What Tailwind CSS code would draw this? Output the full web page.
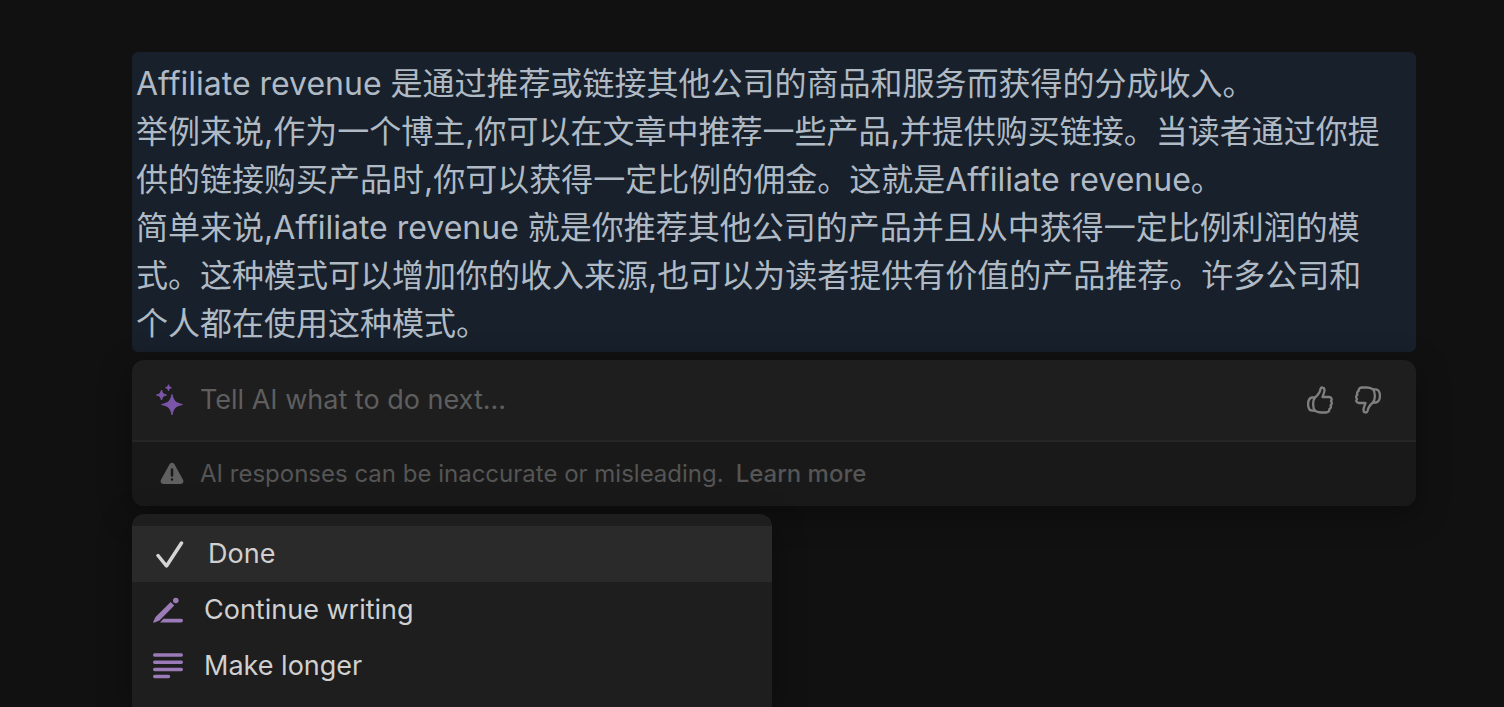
<!doctype html>

<html lang="zh-CN">

  <head>
    <meta charset="utf-8">
    <meta name="viewport" content="width=device-width, initial-scale=1">

    <title>AI writer</title>

    <script src="https://cdn.jsdelivr.net/npm/@tailwindcss/browser@4"></script>
  </head>

  <body class="bg-[#111111] font-['Inter','Noto_Sans_CJK_SC',sans-serif]">
    <main class="min-h-screen flex flex-col pt-13 pl-33 pr-22">

      <article class="bg-[#17202b] text-[#b0bac5] rounded-md px-1 pt-2 pb-1 text-[32px] leading-12">
        <p>Affiliate revenue 是通过推荐或链接其他公司的商品和服务而获得的分成收入。</p>
        <p>举例来说,作为一个博主,你可以在文章中推荐一些产品,并提供购买链接。当读者通过你提<br>供的链接购买产品时,你可以获得一定比例的佣金。这就是Affiliate revenue。</p>
        <p>简单来说,Affiliate revenue 就是你推荐其他公司的产品并且从中获得一定比例利润的模<br>式。这种模式可以增加你的收入来源,也可以为读者提供有价值的产品推荐。许多公司和<br>个人都在使用这种模式。</p>
      </article>

      <section class="mt-2 rounded-xl bg-[#1e1e1e] shadow-[0_8px_32px_rgba(0,0,0,0.35)]">
        <form class="h-20 flex items-center px-6">
          <svg class="w-7 h-8 shrink-0 fill-[#7b55a8] stroke-[#7b55a8] stroke-1" viewBox="0 0 28 32" stroke-linejoin="round" aria-hidden="true">
            <path d="M16 10.500C17.600 17 19.500 19 26.500 20.500C19.500 22 17.600 24 16 30.800C14.400 24 12.500 22 5.500 20.500C12.500 19 14.400 17 16 10.500Z" />
            <path d="M5.500 6C6.500 9.500 7 10 10.500 11C7 12 6.500 12.500 5.500 16C4.500 12.500 4 12 .5 11C4 10 4.500 9.500 5.500 6Z" />
            <path d="M12.500 .7C13.100 2.700 13.500 3.100 15.500 3.700C13.500 4.300 13.100 4.700 12.500 6.700C11.900 4.700 11.500 4.300 9.500 3.700C11.500 3.100 11.900 2.700 12.500 .7Z" />
          </svg>
          <input class="ml-4 flex-1 min-w-0 bg-transparent outline-none text-[27px] leading-10 text-[#d4d4d4] placeholder:text-[#5e5e5e]" type="text" aria-label="Tell AI what to do next" placeholder="Tell AI what to do next...">
          <button class="p-2.5" type="button" aria-label="Good response">
            <svg class="size-7 fill-none stroke-[#808080] stroke-[2.300]" viewBox="0 0 28 28" stroke-linejoin="round" stroke-linecap="round">
              <path d="M9 11.500C12 9 14 6 14.500 3C15 .8 18.500 1 18.500 4C18.500 6.500 17.300 8.500 16.500 11H23C25.500 11 26.500 13.500 25 15C26.300 16.500 26 18.500 24.600 19.300C25.400 21 24.700 22.700 23.300 23.200C23.500 25.500 22 26.500 20 26.500H15C12 26.500 10.500 25.500 9 24.700C6.500 22 6.500 14.500 9 11.500Z" />
              <path d="M9 11.500H6C.8 12.500.8 24 6 24.700H9" />
            </svg>
          </button>
          <button class="p-2.5" type="button" aria-label="Bad response">
            <svg class="size-7 rotate-180 fill-none stroke-[#808080] stroke-[2.300]" viewBox="0 0 28 28" stroke-linejoin="round" stroke-linecap="round">
              <path d="M9 11.500C12 9 14 6 14.500 3C15 .8 18.500 1 18.500 4C18.500 6.500 17.300 8.500 16.500 11H23C25.500 11 26.500 13.500 25 15C26.300 16.500 26 18.500 24.600 19.300C25.400 21 24.700 22.700 23.300 23.200C23.500 25.500 22 26.500 20 26.500H15C12 26.500 10.500 25.500 9 24.700C6.500 22 6.500 14.500 9 11.500Z" />
              <path d="M9 11.500H6C.8 12.500.8 24 6 24.700H9" />
            </svg>
          </button>
        </form>
        <div class="flex items-center border-t-2 border-[#262626] bg-[#191919] rounded-b-xl h-16.5 pl-7 text-2xl text-[#555555]">
          <svg class="size-6 shrink-0" viewBox="0 0 24 24" aria-hidden="true">
            <path class="fill-[#606060]" d="M12 .8C13.200 .8 14 1.500 14.600 2.500L23 17.800C24 19.800 23 22 20.700 22H3.300C1 22 0 19.800 1 17.800L9.400 2.500C10 1.500 10.800 .8 12 .8Z" />
            <path class="stroke-[#191919] stroke-[2.500]" stroke-linecap="round" d="M12 7.500V13.500M12 17.500V17.600" />
          </svg>
          <p class="ml-4">AI responses can be inaccurate or misleading.</p>
          <a class="ml-3 font-medium" href="#">Learn more</a>
        </div>
      </section>

      <!-- Actions -->
      <div class="mt-2 flex-1 w-160 max-w-full rounded-t-xl bg-[#1e1e1e] pt-3 text-[27px] text-[#d0d0d0] shadow-[0_8px_32px_rgba(0,0,0,0.35)]">
        <button class="w-full h-14 flex items-center bg-[#2a2a2a] pl-6 text-left" type="button">
          <svg class="size-7 shrink-0 fill-none stroke-[#d4d4d4] stroke-[3.500]" viewBox="0 0 28 28" stroke-linecap="round" stroke-linejoin="round" aria-hidden="true">
            <path d="M2 15.500L10.500 26L25.500 3" />
          </svg>
          <span class="ml-6">Done</span>
        </button>
        <button class="w-full h-14 flex items-center pl-5 text-left" type="button">
          <svg class="size-8 shrink-0 fill-[#9a7bb8]" viewBox="0 0 32 32" aria-hidden="true">
            <path d="M18.700 8L22.300 11.600L7.500 26.500L2.500 28.500C1.500 28.900 1 28.300 1.400 27.400L3.500 23Z" />
            <circle cx="23.800" cy="6.500" r="2.800" />
            <path d="M11.500 24.800H29.200C31.500 24.800 31.500 28.500 29.200 28.500H8Z" />
          </svg>
          <span class="ml-5">Continue writing</span>
        </button>
        <button class="w-full h-14 flex items-center pl-5 text-left" type="button">
          <svg class="size-8 shrink-0 stroke-[#9a7bb8] stroke-[3.400]" viewBox="0 0 32 32" stroke-linecap="round" aria-hidden="true">
            <path d="M2.700 5H29.300M2.700 12.200H29.300M2.700 19.500H29.300M2.700 26.500H16.500" />
          </svg>
          <span class="ml-5">Make longer</span>
        </button>
      </div>

    </main>
  </body>

</html>
